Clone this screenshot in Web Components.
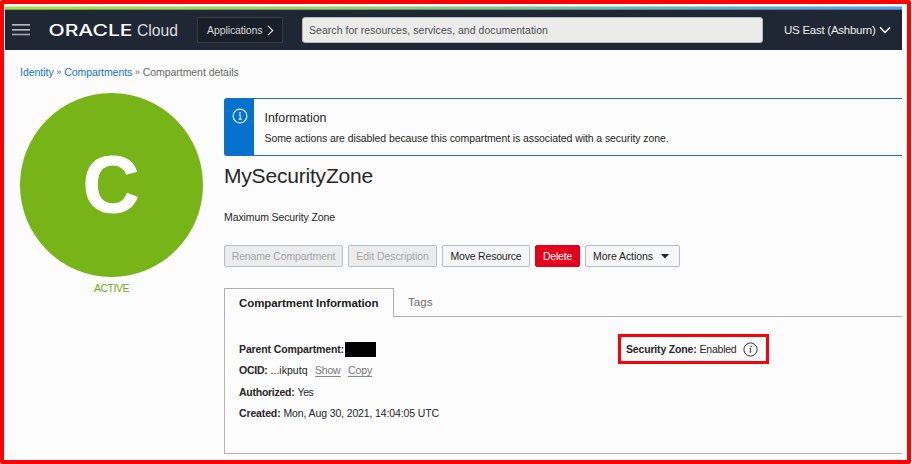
<!DOCTYPE html>
<html lang="en">
<head>
<meta charset="utf-8">
<title>Compartment details</title>
<style>
html,body{margin:0;padding:0;background:#fff}
body{width:912px;height:464px;overflow:hidden;font-family:"Liberation Sans",Arial,sans-serif;font-size:10.5px;color:#262626}
</style>
</head>
<body>
<console-frame></console-frame>
<script>
const define = (name, html, ready) => customElements.define(name, class extends HTMLElement {
  constructor() {
    super();
    const t = document.createElement('template');
    t.innerHTML = html;
    this.attachShadow({mode: 'open'}).append(t.content.cloneNode(true));
  }
  connectedCallback() { if (ready) ready.call(this); }
});

/* A single line of text tracked so that it fills the width given in w. */
define('fit-text', `<style>:host{display:inline-block;white-space:pre;line-height:14px;flex:none}span{display:inline-block}</style><span><slot></slot></span>`, function () {
  const want = parseFloat(this.getAttribute('w'));
  const n = this.textContent.length;
  const span = this.shadowRoot.querySelector('span');
  const natural = span.getBoundingClientRect().width;
  if (want && natural) {
    span.style.letterSpacing = ((want - natural) / n) + 'px';
    this.style.width = want + 'px';
  }
});

define('brand-logo', `<style>:host{display:block;width:130px;height:20px}svg{display:block;overflow:visible}</style>
<svg width="130" height="20" fill="#fff"><text x="-.5" y="15.7" font-family="Inter,sans-serif" font-weight="500" font-size="15.4" textLength="84" lengthAdjust="spacingAndGlyphs">ORACLE</text>
<text x="88" y="15.7" font-family="Liberation Sans,sans-serif" font-size="16" textLength="41" lengthAdjust="spacingAndGlyphs" fill="#dcdee0">Cloud</text></svg>`);

define('top-bar', `<style>
:host{display:block;height:44px}
.stripe{height:4px;background:linear-gradient(90deg,#a8dc4c 0,#9ad26c 35%,#6fb8b0 70%,#5b9fe4 100%);box-shadow:inset 0 -1px #2026304d,inset 0 1px #ffffff70}
.bar{height:40px;background:#1e2733;display:flex;align-items:center;color:#eee}
.menu{margin-left:7px;width:18px;height:14px;flex:none}
brand-logo{margin-left:19px;flex:none}
.apps{margin-left:18px;width:84px;height:24px;border:1px solid #343c47;background:#191f29;display:flex;align-items:center;flex:none;border-radius:1px;color:#d6d8da}
.apps fit-text{margin-left:9px}.apps svg{margin-left:4px}
.search{box-sizing:border-box;margin-left:19px;width:461px;height:26px;border:1px solid #b4bbc0;border-radius:3px;background:#ebebeb;color:#505050;padding-left:6px;display:flex;align-items:center;flex:none}
.region{margin-left:21px;font-size:11.5px}
.region+svg{margin-left:3px}
</style>
<div class="stripe"></div>
<div class="bar">
<svg class="menu" viewBox="0 0 18 14" stroke="#e8eaec" stroke-width="1.3"><path d="M0 1.8H18M0 6.8H18"/><path d="M0 11.5H18" stroke="#a4a9af" stroke-width="1.6"/></svg>
<brand-logo></brand-logo>
<div class="apps"><fit-text w="55.5">Applications</fit-text><svg width="7" height="11" fill="none" stroke="#ddd" stroke-width="1.2"><path d="M1 .8 5.7 5.5 1 10.2"/></svg></div>
<div class="search"><fit-text w="239">Search for resources, services, and documentation</fit-text></div>
<fit-text class="region" w="91.5">US East (Ashburn)</fit-text><svg width="12" height="8" fill="none" stroke="#fff" stroke-width="1.4"><path d="M1 1.2 6 6.4 11 1.2"/></svg>
</div>`);

define('bread-crumbs', `<style>:host{display:flex;height:43px;align-items:center;padding-left:15px;color:#666}
b{font-weight:400;color:#1272c8}i{font-style:normal;width:10.5px;text-align:center;font-size:9.5px}</style>
<b><fit-text w="33.7">Identity</fit-text></b><i>»</i><b><fit-text w="68">Compartments</fit-text></b><i>»</i><fit-text w="96">Compartment details</fit-text>`);

define('status-badge', `<style>:host{display:block;width:183px;text-align:center;color:#6fa91d}
.disc{width:183px;height:184px;border-radius:50%;background:#77b417;color:#fff}
svg{display:block}
.label{margin-top:4px}</style>
<div class="disc"><svg width="183" height="184"><text x="62.7" y="118.5" font-weight="700" font-size="79" stroke="#fff" stroke-width="1" textLength="56.5" lengthAdjust="spacingAndGlyphs" fill="#fff">C</text></svg></div><div class="label"><fit-text w="35">ACTIVE</fit-text></div>`);

define('info-banner', `<style>:host{display:flex;height:56px;border:1px solid #1a6dc6;border-right:0;border-radius:3px 0 0 3px}
.side{width:29px;background:#0572ce;display:flex;justify-content:center;padding-top:9px;box-sizing:border-box}
.body{padding:12px 0 0 10.5px;display:flex;flex-direction:column;gap:6px}.t{font-size:12.4px}</style>
<div class="side"><svg width="16" height="16" fill="none" stroke="#e4effa"><circle cx="8" cy="8" r="6.9" stroke-width="1.2"/><path d="M6.8 7H8.2V11M6.6 11.2H9.8" stroke-width="1.1"/><circle cx="8" cy="4.8" r=".9" fill="#e4effa" stroke="none"/></svg></div>
<div class="body"><fit-text class="t" w="62">Information</fit-text><fit-text w="404">Some actions are disabled because this compartment is associated with a security zone.</fit-text></div>`);

define('action-button', `<style>:host{box-sizing:border-box;height:22px;border:1px solid #b8bdc5;border-radius:2px;background:#f7f7f7;display:flex;align-items:center;justify-content:center;color:#222;flex:none}
:host([disabled]){background:#ececec;color:#a6a6a6}
:host([danger]){background:#e2001d;border-color:#e2001d;color:#fff}</style><slot></slot>`);

define('info-field', `<style>:host{display:flex;height:21.3px;align-items:center}b{font-weight:700}</style><b><slot name="name"></slot></b><slot></slot>`);

define('detail-tabs', `<style>:host{display:block;height:165px}
.tabs{display:flex;height:29px}
.on{box-sizing:border-box;width:170px;border:1px solid #b0b0b0;border-bottom:0;padding:7px 0 0 14px;font-weight:700;font-size:11.5px;color:#1c1c1c}
.off{flex:1;box-sizing:border-box;border-bottom:1px solid #b0b0b0;padding:7px 0 0 14px;font-size:11.5px;color:#6b6b6b}
.panel{box-sizing:border-box;height:137px;border:solid #b4b4b4;border-width:0 0 1px 1px;display:grid;grid-template-columns:379px 1fr;padding:22px 0 0 14px}
.list{margin-top:-.5px}
.hl{box-sizing:border-box;width:151px;height:30px;border:3px solid #fb0007;margin-top:-5px;padding-left:5px;display:flex;align-items:center}
.black{width:31px;height:15px;background:#000;margin-left:1px}
u{color:#777;text-decoration:none;border-bottom:1px solid #8a8a8a;height:12px;display:flex;align-items:center;margin-top:1px}
</style>
<div class="tabs"><div class="on"><fit-text w="139.5">Compartment Information</fit-text></div><div class="off"><fit-text w="24.5">Tags</fit-text></div></div>
<div class="panel"><div class="list">
<info-field><fit-text slot="name" w="105">Parent Compartment:</fit-text><div class="black"></div></info-field>
<info-field><fit-text slot="name" w="28.5">OCID:</fit-text><fit-text w="37" style="margin-left:3px">...ikputq</fit-text><u style="margin-left:7.5px"><fit-text w="25.5">Show</fit-text></u><u style="margin-left:7.5px"><fit-text w="24">Copy</fit-text></u></info-field>
<info-field><fit-text slot="name" w="55.5">Authorized:</fit-text><fit-text w="16" style="margin-left:3px">Yes</fit-text></info-field>
<info-field><fit-text slot="name" w="41.5">Created:</fit-text><fit-text w="155.5" style="margin-left:3px">Mon, Aug 30, 2021, 14:04:05 UTC</fit-text></info-field>
</div><div class="hl"><info-field><fit-text slot="name" w="70.5">Security Zone:</fit-text><fit-text w="37" style="margin-left:3px">Enabled</fit-text><svg style="margin-left:6px;margin-top:1px" width="15" height="15" fill="none" stroke="#333"><circle cx="7.5" cy="7.5" r="6.6" stroke-width="1"/><path d="M6.2 6.6 7.8 6.2 6.9 10.4 8.4 9.8" stroke-width=".9"/><circle cx="8" cy="4.3" r=".8" fill="#333" stroke="none"/></svg></info-field></div></div>`);

define('compartment-main', `<style>:host{display:block;width:678px}
h1{margin:8px 0 0;font-weight:400;font-size:21px;line-height:24px;height:24px;display:flex;align-items:center}
p{margin:22px 0 0;height:14px;line-height:14px}
.row{display:flex;gap:5px;margin:21px 0 21px}
.caret{margin:0 3px 0 8px}
</style>
<info-banner></info-banner>
<h1><fit-text w="149">MySecurityZone</fit-text></h1>
<p><fit-text w="111">Maximum Security Zone</fit-text></p>
<div class="row">
<action-button disabled style="width:119px"><fit-text w="103.5">Rename Compartment</fit-text></action-button>
<action-button disabled style="width:89px"><fit-text w="72.5">Edit Description</fit-text></action-button>
<action-button style="width:88px"><fit-text w="71">Move Resource</fit-text></action-button>
<action-button danger style="width:45px"><fit-text w="29">Delete</fit-text></action-button>
<action-button style="width:95px"><fit-text w="60">More Actions</fit-text><svg class="caret" width="8" height="5"><path d="M0 0H8L4 4.5Z" fill="#222"/></svg></action-button>
</div>
<detail-tabs></detail-tabs>`);

define('console-frame', `<style>
:host{box-sizing:border-box;display:block;width:911px;height:464px;border:4px solid #fe0000;border-radius:2px;padding:2px 5px 0 1px;background:#fff}
.page{background:#fcfcfc;height:454px;width:897px}
.cols{display:flex;gap:21px;padding-left:15px}
compartment-main{margin-top:5px}
</style>
<div class="page"><top-bar></top-bar><bread-crumbs></bread-crumbs>
<div class="cols"><status-badge></status-badge><compartment-main></compartment-main></div></div>`);
</script>
</body>
</html>
